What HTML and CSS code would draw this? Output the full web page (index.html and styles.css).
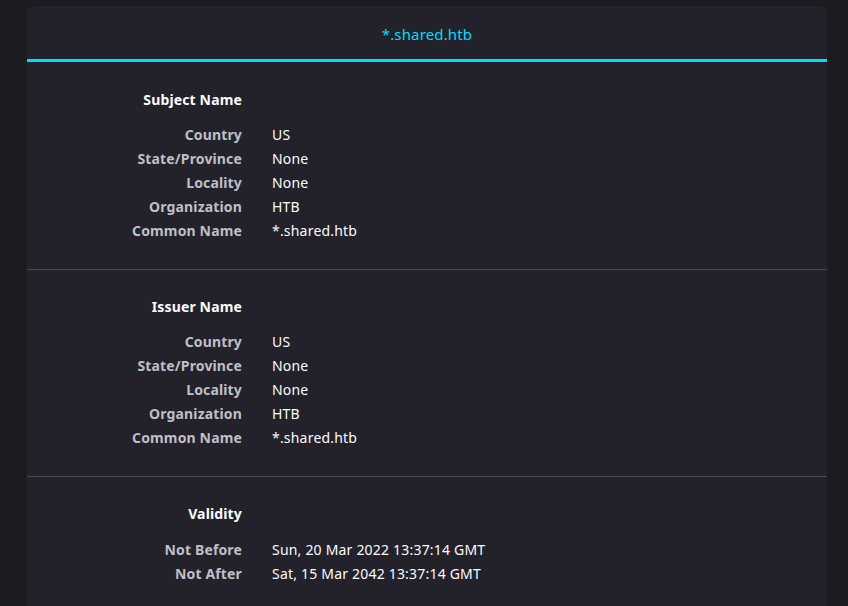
FILE: index.html
```html
<!DOCTYPE html>
<html>
<head>
<meta charset="utf-8">
<link rel="stylesheet" href="styles.css">
</head>
<body>
<div class="card">
  <div class="tabbar"><div class="tab">*.shared.htb</div></div>
  <section class="group first">
    <div class="head">Subject Name</div>
    <div class="grid">
      <div class="k">Country</div><div class="v">US</div>
      <div class="k">State/Province</div><div class="v">None</div>
      <div class="k">Locality</div><div class="v">None</div>
      <div class="k">Organization</div><div class="v">HTB</div>
      <div class="k">Common Name</div><div class="v">*.shared.htb</div>
    </div>
  </section>
  <section class="group">
    <div class="head">Issuer Name</div>
    <div class="grid">
      <div class="k">Country</div><div class="v">US</div>
      <div class="k">State/Province</div><div class="v">None</div>
      <div class="k">Locality</div><div class="v">None</div>
      <div class="k">Organization</div><div class="v">HTB</div>
      <div class="k">Common Name</div><div class="v">*.shared.htb</div>
    </div>
  </section>
  <section class="group last">
    <div class="head">Validity</div>
    <div class="grid">
      <div class="k">Not Before</div><div class="v">Sun, 20 Mar 2022 13:37:14 GMT</div>
      <div class="k">Not After</div><div class="v">Sat, 15 Mar 2042 13:37:14 GMT</div>
    </div>
  </section>
</div>
</body>
</html>
```
FILE: styles.css
```css
html, body { margin: 0; padding: 0; }
body {
  background: #1c1b22;
  font-family: "Noto Sans", "Open Sans", sans-serif;
  font-size: 14px;
  color: #fbfbfe;
  height: 606px;
  overflow: hidden;
  padding-top: 6px;
  box-sizing: border-box;
}
.card {
  width: 800px;
  margin-left: 27px;
  background: #23222b;
  border-radius: 6px 6px 0 0;
  min-height: 620px;
}
.tabbar {
  height: 53px;
  border-bottom: 3px solid #00ddff;
  display: flex;
  align-items: center;
  justify-content: center;
}
.tab {
  color: #00ddff;
  font-size: 15px;
  padding-top: 3px;
  letter-spacing: 0.15px;
}
.group {
  padding: 25px 0 26px;
  border-bottom: 1px solid #4a4950;
}
.group.first { padding-top: 26px; }
.head, .k {
  text-align: right;
  font-weight: 700;
  letter-spacing: 0.15px;
}
.head {
  width: 215px;
  line-height: 24px;
  margin-bottom: 11px;
  color: #fbfbfe;
}
.group.last .head { margin-bottom: 12px; }
.grid {
  display: grid;
  grid-template-columns: 215px 1fr;
  column-gap: 30px;
  line-height: 24px;
}
.k { color: #bfbfc9; }
.v { color: #fbfbfe; letter-spacing: 0.2px; }
```
